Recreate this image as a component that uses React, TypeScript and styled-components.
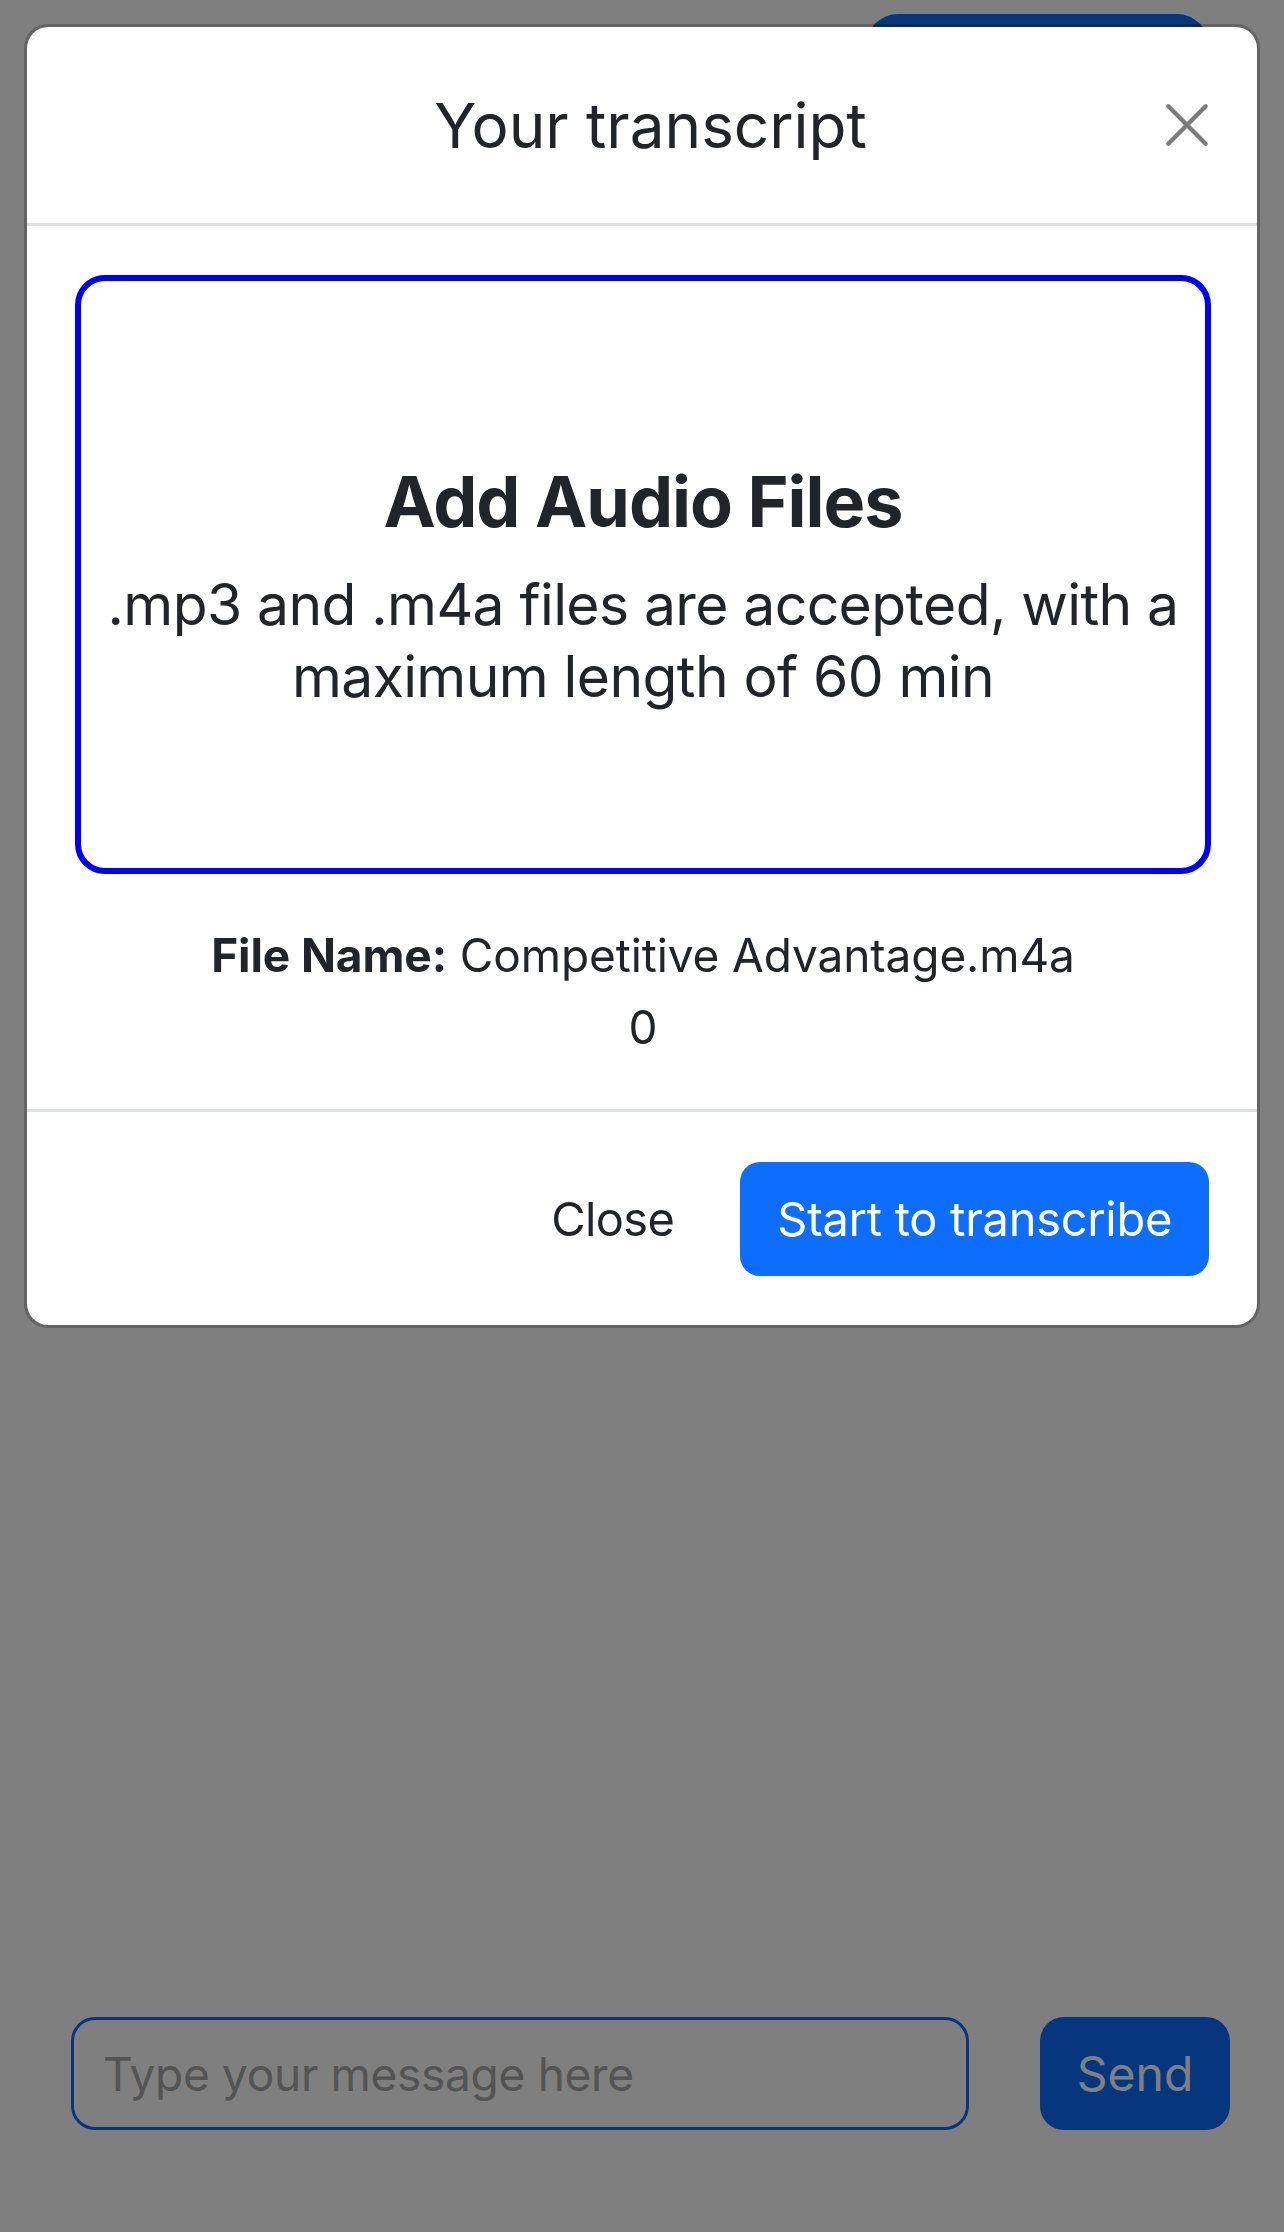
import React from 'react';
import styled, { createGlobalStyle } from 'styled-components';

const GlobalStyle = createGlobalStyle`
  html, body {
    margin: 0;
    height: 100%;
  }
  body {
    font-family: Inter, "Liberation Sans", sans-serif;
    color: #212529;
    background: #fff;
  }
  #root {
    min-height: 100%;
  }
  * {
    box-sizing: border-box;
  }
`;

const App = () => {
    return (
        <>
            <GlobalStyle />
            <Page>
                <TopBar>
                    <TopButton>Upload audio</TopButton>
                </TopBar>
                <ChatBar>
                    <MessageInput type="text" placeholder="Type your message here" />
                    <SendButton>Send</SendButton>
                </ChatBar>
            </Page>
            <Backdrop />
            <Modal>
                <ModalHeader>
                    <span />
                    <ModalTitle>Your transcript</ModalTitle>
                    <CloseIcon aria-label="Close">
                        <svg width="46" height="46" viewBox="0 0 16 16">
                            <path
                                d="M1.5 1.5 L14.5 14.5 M14.5 1.5 L1.5 14.5"
                                stroke="#7b7b7b"
                                strokeWidth="1.5"
                                strokeLinecap="round"
                            />
                        </svg>
                    </CloseIcon>
                </ModalHeader>
                <ModalBody>
                    <DropZone>
                        <DropTitle>Add Audio Files</DropTitle>
                        <DropText>.mp3 and .m4a files are accepted, with a maximum length of 60 min</DropText>
                    </DropZone>
                    <FileInfo>
                        <b>File Name:</b> Competitive Advantage.m4a
                    </FileInfo>
                    <FileInfo>0</FileInfo>
                </ModalBody>
                <ModalFooter>
                    <PlainButton>Close</PlainButton>
                    <PrimaryButton>Start to transcribe</PrimaryButton>
                </ModalFooter>
            </Modal>
        </>
    );
};

const Page = styled.div`
    min-height: 100vh;
    display: flex;
    flex-direction: column;
    background: #fff;
`;

const TopBar = styled.div`
    display: flex;
    justify-content: flex-end;
    padding: 14px 75px 0 0;
`;

const TopButton = styled.button`
    width: 343px;
    height: 114px;
    border: none;
    border-radius: 32px;
    background: #0d6efd;
    color: #fff;
    font: 48px Inter, "Liberation Sans", sans-serif;
`;

const ChatBar = styled.div`
    margin-top: auto;
    display: flex;
    align-items: center;
    gap: 71px;
    padding: 0 54px 102px 71px;
`;

const MessageInput = styled.input`
    flex: 1;
    height: 113px;
    border: 3px solid #0d6efd;
    border-radius: 24px;
    padding: 0 29px;
    font: 46px Inter, "Liberation Sans", sans-serif;
    letter-spacing: -0.3px;
    &::placeholder {
        color: #a9a9a9;
    }
`;

const SendButton = styled.button`
    width: 190px;
    height: 113px;
    border: none;
    border-radius: 24px;
    background: #0d6efd;
    color: #fff;
    font: 48px Inter, "Liberation Sans", sans-serif;
`;

const Backdrop = styled.div`
    position: fixed;
    inset: 0;
    background: rgba(0, 0, 0, 0.5);
`;

const Modal = styled.div`
    position: absolute;
    top: 24px;
    left: 24px;
    right: 24px;
    background: #fff;
    border: 3px solid rgba(0, 0, 0, 0.22);
    border-radius: 24px;
    background-clip: padding-box;
`;

const ModalHeader = styled.div`
    display: grid;
    grid-template-columns: 1fr auto 1fr;
    align-items: center;
    height: 199px;
    padding: 0 47px 0 48px;
    border-bottom: 3px solid #dee2e6;
`;

const ModalTitle = styled.h1`
    margin: 0 0 0 16px;
    font-size: 62px;
    font-weight: 400;
    line-height: 1.5;
`;

const CloseIcon = styled.button`
    justify-self: end;
    display: flex;
    padding: 0;
    border: none;
    background: none;
`;

const ModalBody = styled.div`
    padding: 49px 46px 46px 48px;
    border-bottom: 3px solid #dee2e6;
`;

const DropZone = styled.div`
    height: 599px;
    border: 6px solid #0000ff;
    border-radius: 30px;
    display: flex;
    flex-direction: column;
    align-items: center;
    justify-content: center;
    gap: 24px;
    padding: 22px 0 0;
    text-align: center;
    margin-bottom: 45px;
`;

const DropTitle = styled.h2`
    margin: 0;
    font-size: 70px;
    font-weight: 700;
    line-height: 86px;
    letter-spacing: -1px;
`;

const DropText = styled.p`
    margin: 0;
    font-size: 57px;
    line-height: 72px;
    letter-spacing: -0.6px;
`;

const FileInfo = styled.div`
    text-align: center;
    font-size: 46px;
    line-height: 72px;
    letter-spacing: -0.1px;
`;

const ModalFooter = styled.div`
    height: 213px;
    display: flex;
    justify-content: flex-end;
    align-items: center;
    gap: 30px;
    padding: 0 48px 0 0;
`;

const PlainButton = styled.button`
    height: 114px;
    padding: 0 36px;
    border: none;
    background: none;
    color: #212529;
    font: 47px Inter, "Liberation Sans", sans-serif;
    letter-spacing: -0.6px;
`;

const PrimaryButton = styled.button`
    height: 114px;
    padding: 0 37px;
    border: none;
    border-radius: 20px;
    background: #0d6efd;
    color: #fff;
    font: 47px Inter, "Liberation Sans", sans-serif;
    letter-spacing: -0.3px;
`;

export default App;
